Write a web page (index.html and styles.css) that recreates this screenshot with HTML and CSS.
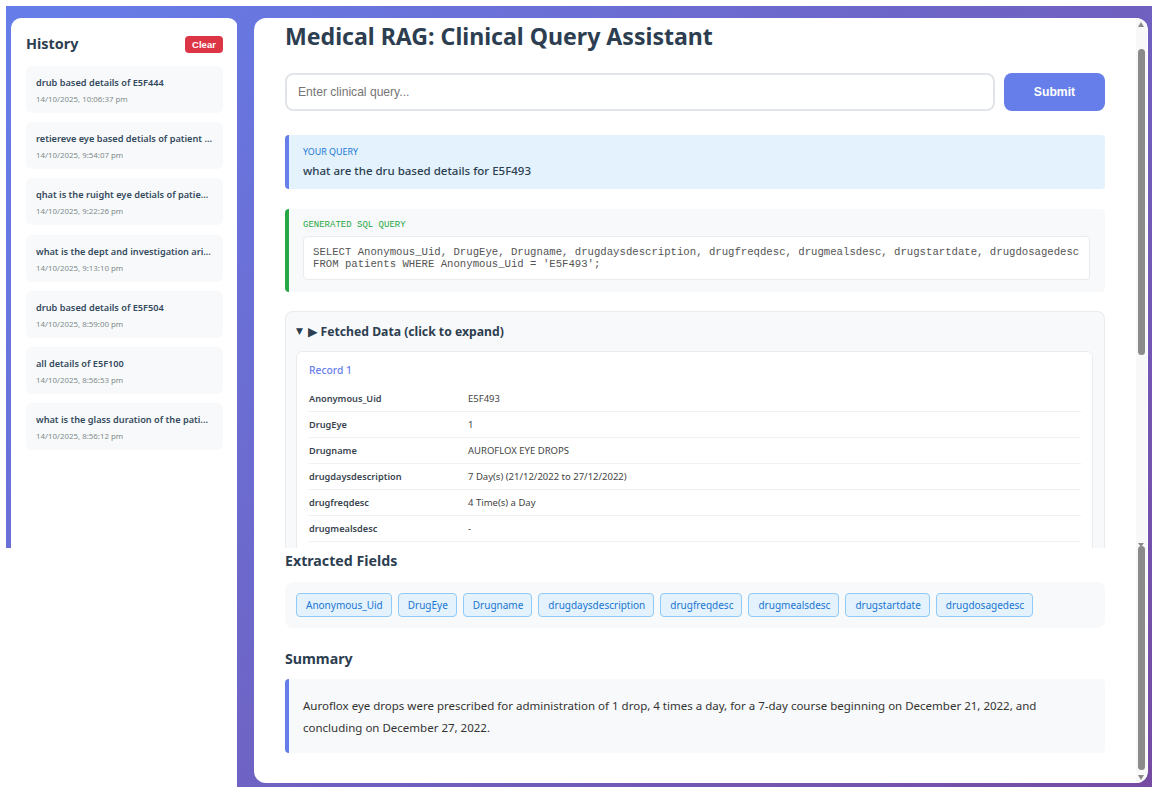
FILE: index.html
```html
<!DOCTYPE html>
<html lang="en">
<head>
<meta charset="utf-8">
<title>Medical RAG: Clinical Query Assistant</title>
<link rel="stylesheet" href="styles.css">
</head>
<body>
<div class="screen">
  <div class="left-frame">
    <aside class="sidebar">
      <div class="sidebar-head">
        <h2 class="sidebar-title">History</h2>
        <button class="clear-btn" type="button">Clear</button>
      </div>
      <ul class="history">
        <li class="h-item"><div class="h-q">drub based details of E5F444</div><div class="h-t">14/10/2025, 10:06:37 pm</div></li>
        <li class="h-item"><div class="h-q">retiereve eye based detials of patient ...</div><div class="h-t">14/10/2025, 9:54:07 pm</div></li>
        <li class="h-item"><div class="h-q">qhat is the ruight eye detials of patie...</div><div class="h-t">14/10/2025, 9:22:26 pm</div></li>
        <li class="h-item"><div class="h-q">what is the dept and investigation ari...</div><div class="h-t">14/10/2025, 9:13:10 pm</div></li>
        <li class="h-item"><div class="h-q">drub based details of E5F504</div><div class="h-t">14/10/2025, 8:59:00 pm</div></li>
        <li class="h-item"><div class="h-q">all details of E5F100</div><div class="h-t">14/10/2025, 8:56:53 pm</div></li>
        <li class="h-item"><div class="h-q">what is the glass duration of the pati...</div><div class="h-t">14/10/2025, 8:56:12 pm</div></li>
      </ul>
    </aside>
  </div>
  <div class="right-frame">
    <main class="panel">
      <div class="content">
        <h1 class="title">Medical RAG: Clinical Query Assistant</h1>
        <form class="query-form">
          <input class="query-input" type="text" placeholder="Enter clinical query...">
          <button class="submit-btn" type="button">Submit</button>
        </form>
        <section class="query-box">
          <div class="query-label">YOUR QUERY</div>
          <div class="query-text">what are the dru based details for E5F493</div>
        </section>
        <section class="sql-box">
          <div class="sql-label">GENERATED SQL QUERY</div>
          <pre class="sql-code">SELECT Anonymous_Uid, DrugEye, Drugname, drugdaysdescription, drugfreqdesc, drugmealsdesc, drugstartdate, drugdosagedesc
FROM patients WHERE Anonymous_Uid = 'E5F493';</pre>
        </section>
        <section class="fetched">
          <div class="fetched-summary"><span class="marker marker-open">▼</span><span class="marker marker-play">▶</span>Fetched Data (click to expand)</div>
          <div class="record">
            <div class="record-title">Record 1</div>
            <div class="row"><span class="k">Anonymous_Uid</span><span class="v">E5F493</span></div>
            <div class="row"><span class="k">DrugEye</span><span class="v">1</span></div>
            <div class="row"><span class="k">Drugname</span><span class="v">AUROFLOX EYE DROPS</span></div>
            <div class="row"><span class="k">drugdaysdescription</span><span class="v">7 Day(s) (21/12/2022 to 27/12/2022)</span></div>
            <div class="row"><span class="k">drugfreqdesc</span><span class="v">4 Time(s) a Day</span></div>
            <div class="row"><span class="k">drugmealsdesc</span><span class="v">-</span></div>
          </div>
        </section>
        <h3 class="sec-title sec-fields">Extracted Fields</h3>
        <div class="chips">
          <span class="chip">Anonymous_Uid</span>
          <span class="chip">DrugEye</span>
          <span class="chip">Drugname</span>
          <span class="chip">drugdaysdescription</span>
          <span class="chip">drugfreqdesc</span>
          <span class="chip">drugmealsdesc</span>
          <span class="chip">drugstartdate</span>
          <span class="chip">drugdosagedesc</span>
        </div>
        <h3 class="sec-title sec-summary">Summary</h3>
        <div class="summary">Auroflox eye drops were prescribed for administration of 1 drop, 4 times a day, for a 7-day course beginning on December 21, 2022, and concluding on December 27, 2022.</div>
      </div>
      <div class="scrollbar" aria-hidden="true">
        <span class="sb-up"></span>
        <span class="sb-thumb sb-thumb-top"></span>
        <span class="sb-cut"></span>
        <span class="sb-thumb sb-thumb-bottom"></span>
        <span class="sb-down"></span>
      </div>
    </main>
  </div>
</div>
</body>
</html>
```

FILE: styles.css
```css
* { box-sizing: border-box; }

html, body {
  margin: 0;
  padding: 0;
  background: #ffffff;
}

body {
  font-family: "Noto Sans", "Open Sans", sans-serif;
  color: #2c3e50;
  width: 1157px;
  height: 795px;
  overflow: hidden;
}

.screen {
  display: flex;
  align-items: flex-start;
  padding: 6px 5px 0 6px;
}

.left-frame,
.right-frame {
  background: linear-gradient(135deg, #667eea 0%, #764ba2 100%) fixed;
}

.left-frame {
  width: 231px;
  height: 542px;
  padding: 12px 0 0 5px;
}

.sidebar {
  width: 227px;
  height: 530px;
  background: #ffffff;
  border-radius: 10px 10px 0 0;
  padding: 16px 15px 0 15px;
}

.sidebar-head {
  display: flex;
  align-items: center;
  justify-content: space-between;
}

.sidebar-title {
  margin: 0;
  font-size: 14.4px;
  line-height: 20px;
  font-weight: 700;
  color: #2c3e50;
}

.clear-btn {
  width: 38px;
  height: 17px;
  padding: 0;
  border: none;
  border-radius: 4px;
  background: #dc3545;
  color: #ffffff;
  font-family: "Liberation Sans", Arial, sans-serif;
  font-size: 9.5px;
  font-weight: 700;
}

.history {
  list-style: none;
  margin: 12px 0 0 0;
  padding: 0;
  display: flex;
  flex-direction: column;
  gap: 9.2px;
}

.h-item {
  height: 47px;
  background: #f8f9fa;
  border-radius: 6px;
  padding: 10px 8px 8px 10px;
}

.h-q {
  font-size: 9.2px;
  line-height: 14px;
  font-weight: 600;
  color: #34495e;
  white-space: nowrap;
}

.h-t {
  margin-top: 3px;
  font-size: 7.9px;
  line-height: 12px;
  color: #7f8c8d;
}

.right-frame {
  flex: 1;
  height: 781px;
  padding: 12px 4px 4px 17px;
}

.panel {
  position: relative;
  height: 100%;
  background: #ffffff;
  border-radius: 12px;
  overflow: hidden;
}

.content {
  padding: 2px 43px 0 31px;
}

.title {
  margin: 0;
  font-size: 23.1px;
  line-height: 32px;
  font-weight: 700;
  color: #2c3e50;
}

.query-form {
  display: flex;
  gap: 9px;
  margin: 21px 0 0 0;
}

.query-input {
  flex: 1;
  height: 38px;
  border: 2px solid #e1e5e9;
  border-radius: 8px;
  padding: 0 11px;
  font-family: "Liberation Sans", Arial, sans-serif;
  font-size: 12.1px;
  color: #333;
  background: #fff;
  outline: none;
}

.query-input::placeholder {
  color: #757575;
}

.submit-btn {
  width: 101px;
  height: 38px;
  border: none;
  border-radius: 8px;
  background: #667eea;
  color: #ffffff;
  font-family: "Liberation Sans", Arial, sans-serif;
  font-size: 12.2px;
  font-weight: 700;
}

.query-box {
  margin-top: 24px;
  height: 54px;
  background: #e3f2fd;
  border-left: 4px solid #667eea;
  border-radius: 4px;
  padding: 10px 14px 9px 14px;
}

.query-label {
  font-size: 8.9px;
  line-height: 14px;
  color: #1976d2;
  text-transform: uppercase;
}

.query-text {
  margin-top: 3px;
  font-size: 11.5px;
  line-height: 18px;
  font-weight: 500;
  color: #2c3e50;
}

.sql-box {
  margin-top: 20px;
  background: #f8f9fa;
  border-left: 4px solid #28a745;
  border-radius: 4px;
  padding: 11px 15px 12px 14px;
}

.sql-label {
  font-family: "Liberation Mono", "Courier New", monospace;
  font-size: 9px;
  line-height: 10px;
  color: #28a745;
  margin-bottom: 6px;
}

.sql-code {
  margin: 0;
  background: #ffffff;
  border: 1px solid #e9ecef;
  border-radius: 4px;
  padding: 9px 9px;
  font-family: "Liberation Mono", "Courier New", monospace;
  font-size: 10.65px;
  line-height: 12px;
  color: #555555;
  white-space: pre;
  overflow: hidden;
}

.fetched {
  margin-top: 19px;
  height: 237px;
  background: #f8f9fa;
  border: 1px solid #e9ecef;
  border-bottom: none;
  border-radius: 8px 8px 0 0;
  padding: 10px 11px 0 10px;
  overflow: hidden;
}

.fetched-summary {
  display: flex;
  align-items: center;
  font-size: 12.2px;
  line-height: 19px;
  font-weight: 700;
  color: #2c3e50;
}

.marker {
  font-family: "DejaVu Sans", sans-serif;
  color: #2c3e50;
  line-height: 19px;
}

.marker-open {
  font-size: 9px;
  margin-right: 5px;
}

.marker-play {
  font-size: 12.5px;
  margin-right: 3px;
}

.record {
  margin-top: 10px;
  background: #ffffff;
  border: 1px solid #e9ecef;
  border-radius: 6px;
  padding: 10px 11px 30px 12px;
}

.record-title {
  font-size: 10.3px;
  line-height: 16px;
  font-weight: 500;
  color: #667eea;
  margin-bottom: 8px;
}

.row {
  display: flex;
  padding: 6px 0;
  border-bottom: 1px solid #f1f1f1;
  font-size: 9.3px;
  line-height: 13px;
}

.k {
  width: 159px;
  flex: none;
  font-weight: 600;
  font-size: 9.2px;
  color: #3a4550;
}

.v {
  font-size: 9.5px;
  color: #444444;
}

.sec-title {
  margin: 0;
  font-size: 14.2px;
  line-height: 20px;
  font-weight: 700;
  color: #2c3e50;
}

.sec-fields {
  margin-top: 3px;
}

.chips {
  margin-top: 11px;
  background: #f8f9fa;
  border-radius: 8px;
  padding: 11px 11px;
  display: flex;
  flex-wrap: wrap;
  gap: 6px;
}

.chip {
  height: 24px;
  line-height: 22px;
  padding: 0 8px 0 9px;
  border: 1px solid #90caf9;
  border-radius: 4px;
  background: #e3f2fd;
  color: #1976d2;
  font-size: 10px;
}

.sec-summary {
  margin-top: 21px;
}

.summary {
  margin-top: 10px;
  background: #f8f9fa;
  border-left: 4px solid #667eea;
  border-radius: 4px;
  padding: 16px 18px 14px 14px;
  font-size: 11.5px;
  line-height: 22px;
  color: #333333;
}

/* decorative scrollbar drawn over the panel's right edge */
.scrollbar {
  position: absolute;
  top: 0;
  right: 1px;
  bottom: 0;
  width: 11px;
  background: #f8f8f8;
}

.sb-up,
.sb-down,
.sb-cut {
  position: absolute;
  left: 2px;
  width: 0;
  height: 0;
  border-left: 3.5px solid transparent;
  border-right: 3.5px solid transparent;
}

.sb-up {
  top: 4px;
  border-bottom: 5px solid #8a8a8a;
}

.sb-cut {
  top: 525px;
  border-top: 4px solid #8a8a8a;
}

.sb-down {
  bottom: 3px;
  border-top: 5px solid #8a8a8a;
}

.sb-thumb {
  position: absolute;
  left: 2px;
  width: 7px;
  border-radius: 4px;
  background: #8a8a8a;
}

.sb-thumb-top {
  top: 31px;
  height: 306px;
}

.sb-thumb-bottom {
  top: 528px;
  height: 224px;
}
```
